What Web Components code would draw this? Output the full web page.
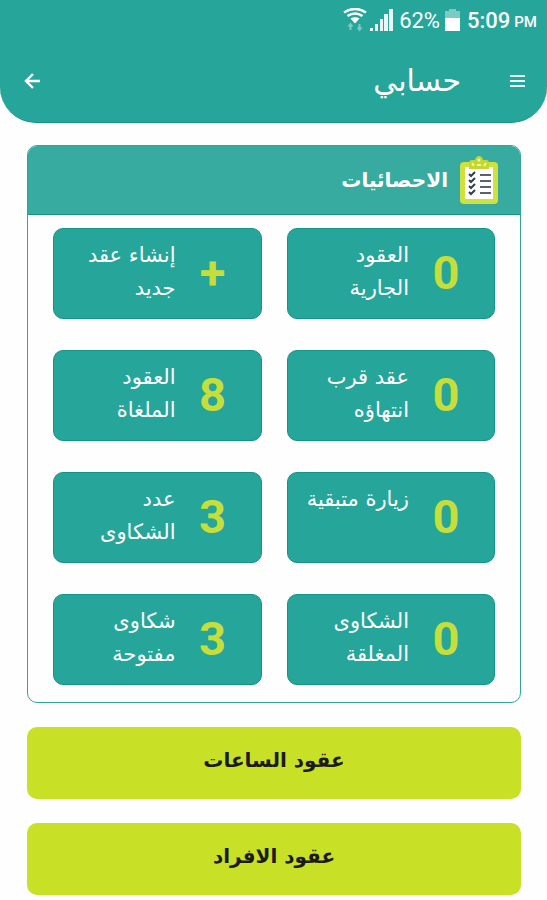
<!DOCTYPE html>
<html lang="ar" dir="rtl">
<head>
<meta charset="utf-8">
<meta name="viewport" content="width=device-width, initial-scale=1">
<title>حسابي</title>
<style>
    body {
        margin: 0;
        background-color: #fefefe;
        font-family: "DejaVu Sans", sans-serif;
        --teal: #26a69a;
        --teal-dark: #149487;
        --lime: #c8e026;
    }
</style>
</head>
<body>
<account-page>
    <status-bar slot="top" battery="62%" time="5:09" period="PM"></status-bar>
    <app-bar slot="top">حسابي</app-bar>

    <stats-card>
        <span slot="title">الاحصائيات</span>
        <stat-tile value="0">العقود<br>الجارية</stat-tile>
        <stat-tile value="+">إنشاء عقد<br>جديد</stat-tile>
        <stat-tile value="0">عقد قرب<br>انتهاؤه</stat-tile>
        <stat-tile value="8">العقود<br>الملغاة</stat-tile>
        <stat-tile value="0">زيارة متبقية</stat-tile>
        <stat-tile value="3">عدد<br>الشكاوى</stat-tile>
        <stat-tile value="0">الشكاوى<br>المغلقة</stat-tile>
        <stat-tile value="3">شكاوى<br>مفتوحة</stat-tile>
    </stats-card>
    <action-button>عقود الساعات</action-button>
    <action-button>عقود الافراد</action-button>
</account-page>

<script>
class AccountPage extends HTMLElement {
    constructor() {
        super();
        this.attachShadow({ mode: 'open' });
        this.shadowRoot.innerHTML = `
            <style>
                :host {
                    display: block;
                }

                header {
                    background-color: var(--teal);
                    border-bottom: 1px solid var(--teal-dark);
                    border-radius: 0 0 36px 36px;
                }

                main {
                    display: flex;
                    flex-direction: column;
                    gap: 24px;
                    padding: 22px 26px 4px 27px;
                }
            </style>
            <header><slot name="top"></slot></header>
            <main><slot></slot></main>
        `;
    }
}

class StatusBar extends HTMLElement {
    constructor() {
        super();
        this.attachShadow({ mode: 'open' });
    }

    connectedCallback() {
        this.shadowRoot.innerHTML = `
            <style>
                :host {
                    display: flex;
                    direction: ltr;
                    justify-content: flex-end;
                    align-items: center;
                    height: 40px;
                    padding: 0 10px;
                    color: #fff;
                    font-family: Roboto, sans-serif;
                    font-size: 22px;
                }

                svg {
                    flex: none;
                }

                .signal {
                    margin: 0 6px 0 3px;
                }

                .battery {
                    margin: 0 7px 0 5px;
                }

                .time {
                    font-weight: 500;
                }

                .period {
                    margin-left: 4px;
                    padding-top: 4px;
                    font-size: 15px;
                    font-weight: 500;
                }
            </style>
            <svg width="24" height="24" viewBox="0 0 24 24" fill="none" stroke="#fff">
                <path d="M1 4.500Q12-2.500 23 4.500M4.500 8Q12 3 19.500 8" stroke-width="2.600"/>
                <path d="M7.500 10.500Q12 8 16.500 10.500L12 15.500Z" fill="#fff" stroke="none"/>
                <path d="M7.500 22V16M5.500 18.500L7.500 16L9.500 18.500M16.500 16V22M14.500 19.500L16.500 22L18.500 19.500" stroke-width="2" opacity=".4"/>
            </svg>
            <svg class="signal" width="23" height="24" viewBox="0 0 23 24" fill="#fff">
                <path d="M0 20h3v3H0zM5 16h3v7H5zM10 11h3v12h-3zM14 6h4v17h-4zM19 1h4v22h-4z" opacity=".9"/>
            </svg>
            <span>${this.getAttribute('battery')}</span>
            <svg class="battery" width="15" height="22" viewBox="0 0 15 22">
                <path d="M0 2h4V0h7v2h4v8H0z" fill="#7ccac3"/>
                <path d="M0 9h15v13H0z" fill="#fff"/>
            </svg>
            <span class="time">${this.getAttribute('time')}</span>
            <span class="period">${this.getAttribute('period')}</span>
        `;
    }
}

class AppBar extends HTMLElement {
    constructor() {
        super();
        this.attachShadow({ mode: 'open' });
        this.shadowRoot.innerHTML = `
            <style>
                :host {
                    display: flex;
                    align-items: center;
                    height: 82px;
                    padding: 0 16px 0 18px;
                    color: #fff;
                }

                h1 {
                    flex: 1;
                    margin: 0 42px;
                    font-size: 30px;
                    font-weight: 400;
                    line-height: 40px;
                }

                button {
                    display: flex;
                    align-items: center;
                    justify-content: center;
                    width: 28px;
                    height: 28px;
                    padding: 0;
                    border: none;
                    background: none;
                    cursor: pointer;
                }
            </style>
            <button type="button" aria-label="القائمة">
                <svg width="16" height="12" viewBox="0 0 16 12" stroke="#fff" stroke-width="2">
                    <path d="M1 1h15M1 6h15M1 11h15" opacity=".9"/>
                </svg>
            </button>
            <h1><slot></slot></h1>
            <button type="button" aria-label="رجوع">
                <svg width="16" height="16" viewBox="0 0 16 16" fill="none" stroke="#fff" stroke-width="2.400">
                    <path d="M16 8H2M9 1L2 8L9 15"/>
                </svg>
            </button>
        `;
    }
}

class StatsCard extends HTMLElement {
    constructor() {
        super();
        this.attachShadow({ mode: 'open' });
        this.shadowRoot.innerHTML = `
            <style>
                :host {
                    display: block;
                    overflow: hidden;
                    border: 1px solid #35a596;
                    border-radius: 10px;
                }

                .head {
                    display: flex;
                    align-items: center;
                    gap: 12px;
                    height: 69px;
                    padding: 0 22px;
                    background-color: #38aba0;
                    border-bottom: 1px solid var(--teal-dark);
                    box-sizing: border-box;
                    color: #fff;
                }

                h2 {
                    margin: 0;
                    font-size: 20px;
                    font-weight: 700;
                    line-height: 32px;
                }

                .grid {
                    display: grid;
                    grid-template-columns: 1fr 1fr;
                    gap: 31px 25px;
                    padding: 13px 25px 17px;
                }
            </style>
            <div class="head">
                <svg width="38" height="48" viewBox="0 0 38 48" fill="none">
                    <rect y="6" width="38" height="42" rx="4" fill="#d0e03c"/>
                    <path d="M5 11h28v32H5z" fill="#fff"/>
                    <path d="M9 13V7q0-3 3-3h3q1-4 4-4t4 4h3q3 0 3 3v6z" fill="#c3d82f"/>
                    <path d="M12 7l2 3M26 7l-2 3M17 9h4" stroke="#eef5ae" stroke-width="2"/>
                    <circle cx="19" cy="4" r="1.500" fill="#f1f6bd"/>
                    <path d="M20 19h11M20 25h11M20 31h11M20 37h11" stroke="#59636c" stroke-width="2"/>
                    <path d="M9 18l2 2 4-4M9 24l2 2 4-4M9 30l2 2 4-4M9 36l2 2 4-4" stroke="#343e49" stroke-width="2"/>
                </svg>
                <h2><slot name="title"></slot></h2>
            </div>
            <div class="grid"><slot></slot></div>
        `;
    }
}

class StatTile extends HTMLElement {
    constructor() {
        super();
        this.attachShadow({ mode: 'open' });
    }

    connectedCallback() {
        this.shadowRoot.innerHTML = `
            <style>
                :host {
                    display: block;
                }

                button {
                    display: flex;
                    align-items: center;
                    gap: 23px;
                    width: 100%;
                    height: 91px;
                    padding: 0 0 2px;
                    padding-inline-start: 34px;
                    border: 1px solid var(--teal-dark);
                    border-radius: 10px;
                    background-color: var(--teal);
                    color: #fff;
                    font: inherit;
                    text-align: start;
                    cursor: pointer;
                }

                .value {
                    width: 28px;
                    color: #c6de3c;
                    font-family: Roboto, sans-serif;
                    font-size: 47px;
                    font-weight: 700;
                    text-align: center;
                }

                .label {
                    align-self: flex-start;
                    margin-top: 10px;
                    font-size: 21px;
                    line-height: 33px;
                    white-space: nowrap;
                }
            </style>
            <button type="button">
                <span class="value">${this.getAttribute('value')}</span>
                <span class="label"><slot></slot></span>
            </button>
        `;
    }
}

class ActionButton extends HTMLElement {
    constructor() {
        super();
        this.attachShadow({ mode: 'open' });
        this.shadowRoot.innerHTML = `
            <style>
                :host {
                    display: block;
                }

                button {
                    width: 100%;
                    height: 72px;
                    padding: 0 0 6px;
                    border: none;
                    border-radius: 10px;
                    background-color: var(--lime);
                    color: #1b1b1b;
                    font-family: inherit;
                    font-size: 20px;
                    font-weight: 700;
                    cursor: pointer;
                }
            </style>
            <button type="button"><slot></slot></button>
        `;
    }
}

customElements.define('account-page', AccountPage);
customElements.define('status-bar', StatusBar);
customElements.define('app-bar', AppBar);
customElements.define('stats-card', StatsCard);
customElements.define('stat-tile', StatTile);
customElements.define('action-button', ActionButton);
</script>
</body>
</html>
